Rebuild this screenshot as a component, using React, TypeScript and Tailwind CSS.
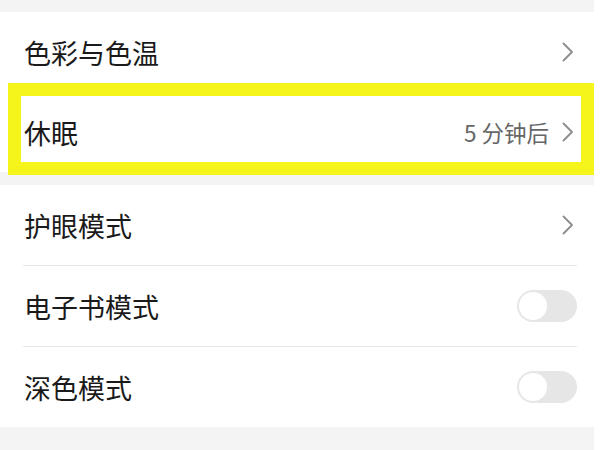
import React from "react";

const font = { fontFamily: '"Noto Sans CJK SC", "Noto Sans", sans-serif' };

const Chevron = () => (
  <svg width="12" height="20" viewBox="0 0 12 20" fill="none" className="shrink-0 mr-[3px]">
    <path d="M1.5 1.5 L10 10 L1.5 18.5" stroke="#8c8c8c" strokeWidth="1.8" strokeLinecap="round" strokeLinejoin="round" />
  </svg>
);

const Toggle = () => (
  <div className="w-[60px] h-[32px] rounded-full bg-[#e6e6e6] p-[2px] flex items-center">
    <div className="w-[28px] h-[28px] rounded-full bg-white" />
  </div>
);

interface RowProps {
  label: string;
  value?: string;
  toggle?: boolean;
  divider?: boolean;
}

const Row = ({ label, value, toggle, divider }: RowProps) => (
  <div className="pl-[23px] pr-[17px]">
    <div className="h-20 flex items-center justify-between">
      <span className="pl-[1px] text-[27px] text-[#1a1a1a] leading-none">{label}</span>
      <div className="flex items-center gap-[13px]">
        {value && <span className="text-[22.5px] text-[#666666] leading-none">{value}</span>}
        {toggle ? <Toggle /> : <Chevron />}
      </div>
    </div>
    {divider && <div className="h-px bg-[#e8e8e8]" />}
  </div>
);

export default function App() {
  return (
    <div className="w-[600px] h-[450px] flex bg-white overflow-hidden" style={font}>
      <div className="w-[594px] bg-[#f4f4f4] flex flex-col relative">
        <div className="h-3" />
        <div className="bg-white">
          <Row label="色彩与色温" />
          <Row label="休眠" value="5 分钟后" />
        </div>
        <div className="h-[13px]" />
        <div className="bg-white">
          <Row label="护眼模式" divider />
          <Row label="电子书模式" toggle divider />
          <Row label="深色模式" toggle />
        </div>
        <div className="absolute left-[8px] top-[83px] w-[586px] h-[92px] border-[13px] border-[#f5f51c]" />
      </div>
      <div className="flex-1 bg-white" />
    </div>
  );
}
